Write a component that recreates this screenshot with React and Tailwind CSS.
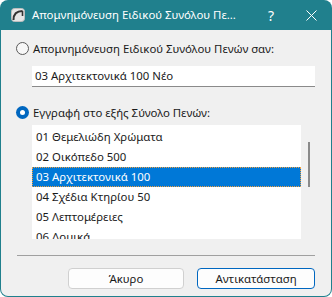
import React from "react";

const font = { fontFamily: '"Noto Sans", "Liberation Sans", sans-serif' };

function AppIcon() {
  return (
    <svg width="14" height="14" viewBox="0 0 14 14">
      <rect x="0.5" y="0.5" width="13" height="13" rx="3" fill="#e6e6e6" stroke="#bdbdbd" />
      <path d="M2.5 12 C2.5 6 6 3 11.5 3" fill="none" stroke="#333" strokeWidth="2" />
      <path d="M11.5 3 L11.5 8" fill="none" stroke="#333" strokeWidth="1.6" />
    </svg>
  );
}

function Radio({ checked }) {
  return checked ? (
    <span className="w-[13px] h-[13px] rounded-full bg-[#0067c0] flex items-center justify-center shrink-0">
      <span className="w-[5px] h-[5px] rounded-full bg-white" />
    </span>
  ) : (
    <span className="w-[13px] h-[13px] rounded-full border border-[#5a5a5a] bg-[#f7f7f7] shrink-0" />
  );
}

const sets = [
  "01 Θεμελιώδη Χρώματα",
  "02 Οικόπεδο 500",
  "03 Αρχιτεκτονικά 100",
  "04 Σχέδια Κτηρίου 50",
  "05 Λεπτομέρειες",
  "06 Δομικά",
];

export default function App() {
  return (
    <div className="w-[332px] h-[297px] bg-white text-[11.4px] text-[#1a1a1a]" style={font}>
      <div className="w-full h-full flex flex-col bg-[#20808d] rounded-t-[8px] rounded-b-[8px] px-px pb-px overflow-hidden">
        {/* Title bar */}
        <div className="h-[30px] flex items-center text-white shrink-0">
          <div className="ml-[10px] mr-[7px] flex items-center">
            <AppIcon />
          </div>
          <span className="whitespace-nowrap">Απομνημόνευση Ειδικού Συνόλου Πε...</span>
          <div className="flex-1" />
          <span className="w-[16px] text-center text-[14px]">?</span>
          <svg width="11" height="11" viewBox="0 0 11 11" className="ml-[27px] mr-[14px]">
            <path d="M0.5 0.5 L10.5 10.5 M10.5 0.5 L0.5 10.5" stroke="#fff" strokeWidth="1" />
          </svg>
        </div>

        {/* Body */}
        <div className="flex-1 bg-[#f0f0f0] rounded-b-[7px] flex flex-col pl-[15px] pr-[16px] pt-[12px]">
          <div className="flex items-center gap-[4px] h-[13px]">
            <Radio />
            <span>Απομνημόνευση Ειδικού Συνόλου Πενών σαν:</span>
          </div>
          <div className="ml-[16px] mt-[11px] h-[21px] bg-white border-b border-[#8a8a8a] flex items-center px-[3px]">
            03 Αρχιτεκτονικά 100 Νέο
          </div>

          <div className="flex items-center gap-[4px] h-[13px] mt-[19px]">
            <Radio checked />
            <span>Εγγραφή στο εξής Σύνολο Πενών:</span>
          </div>
          <div className="ml-[16px] mt-[6px] h-[114px] flex">
            <div className="w-[269px] bg-white overflow-hidden pt-[2px]">
              {sets.map((s, i) => (
                <div
                  key={s}
                  className={
                    i === 2
                      ? "h-[20px] flex items-center px-[3px] bg-[#0078d7] text-white border border-dotted border-[#f0a040]"
                      : "h-[20px] flex items-center px-[4px]"
                  }
                >
                  {s}
                </div>
              ))}
            </div>
            <div className="flex-1 flex justify-center pt-[17px]">
              <div className="w-[2px] h-[45px] bg-[#8a8a8a] ml-px" />
            </div>
          </div>

          <div className="mt-[16px] h-px bg-[#a0a0a0] ml-px" />

          <div className="flex justify-end gap-[13px] mt-[12px]">
            <button className="w-[116px] h-[21px] rounded-[4px] border border-[#d0d0d0] bg-[#fdfdfd] text-[11.4px] text-[#1a1a1a]">
              Άκυρο
            </button>
            <button className="w-[118px] h-[21px] rounded-[4px] border border-[#0067c0] bg-[#fdfdfd] text-[11.4px] text-[#1a1a1a]">
              Αντικατάσταση
            </button>
          </div>
        </div>
      </div>
    </div>
  );
}
